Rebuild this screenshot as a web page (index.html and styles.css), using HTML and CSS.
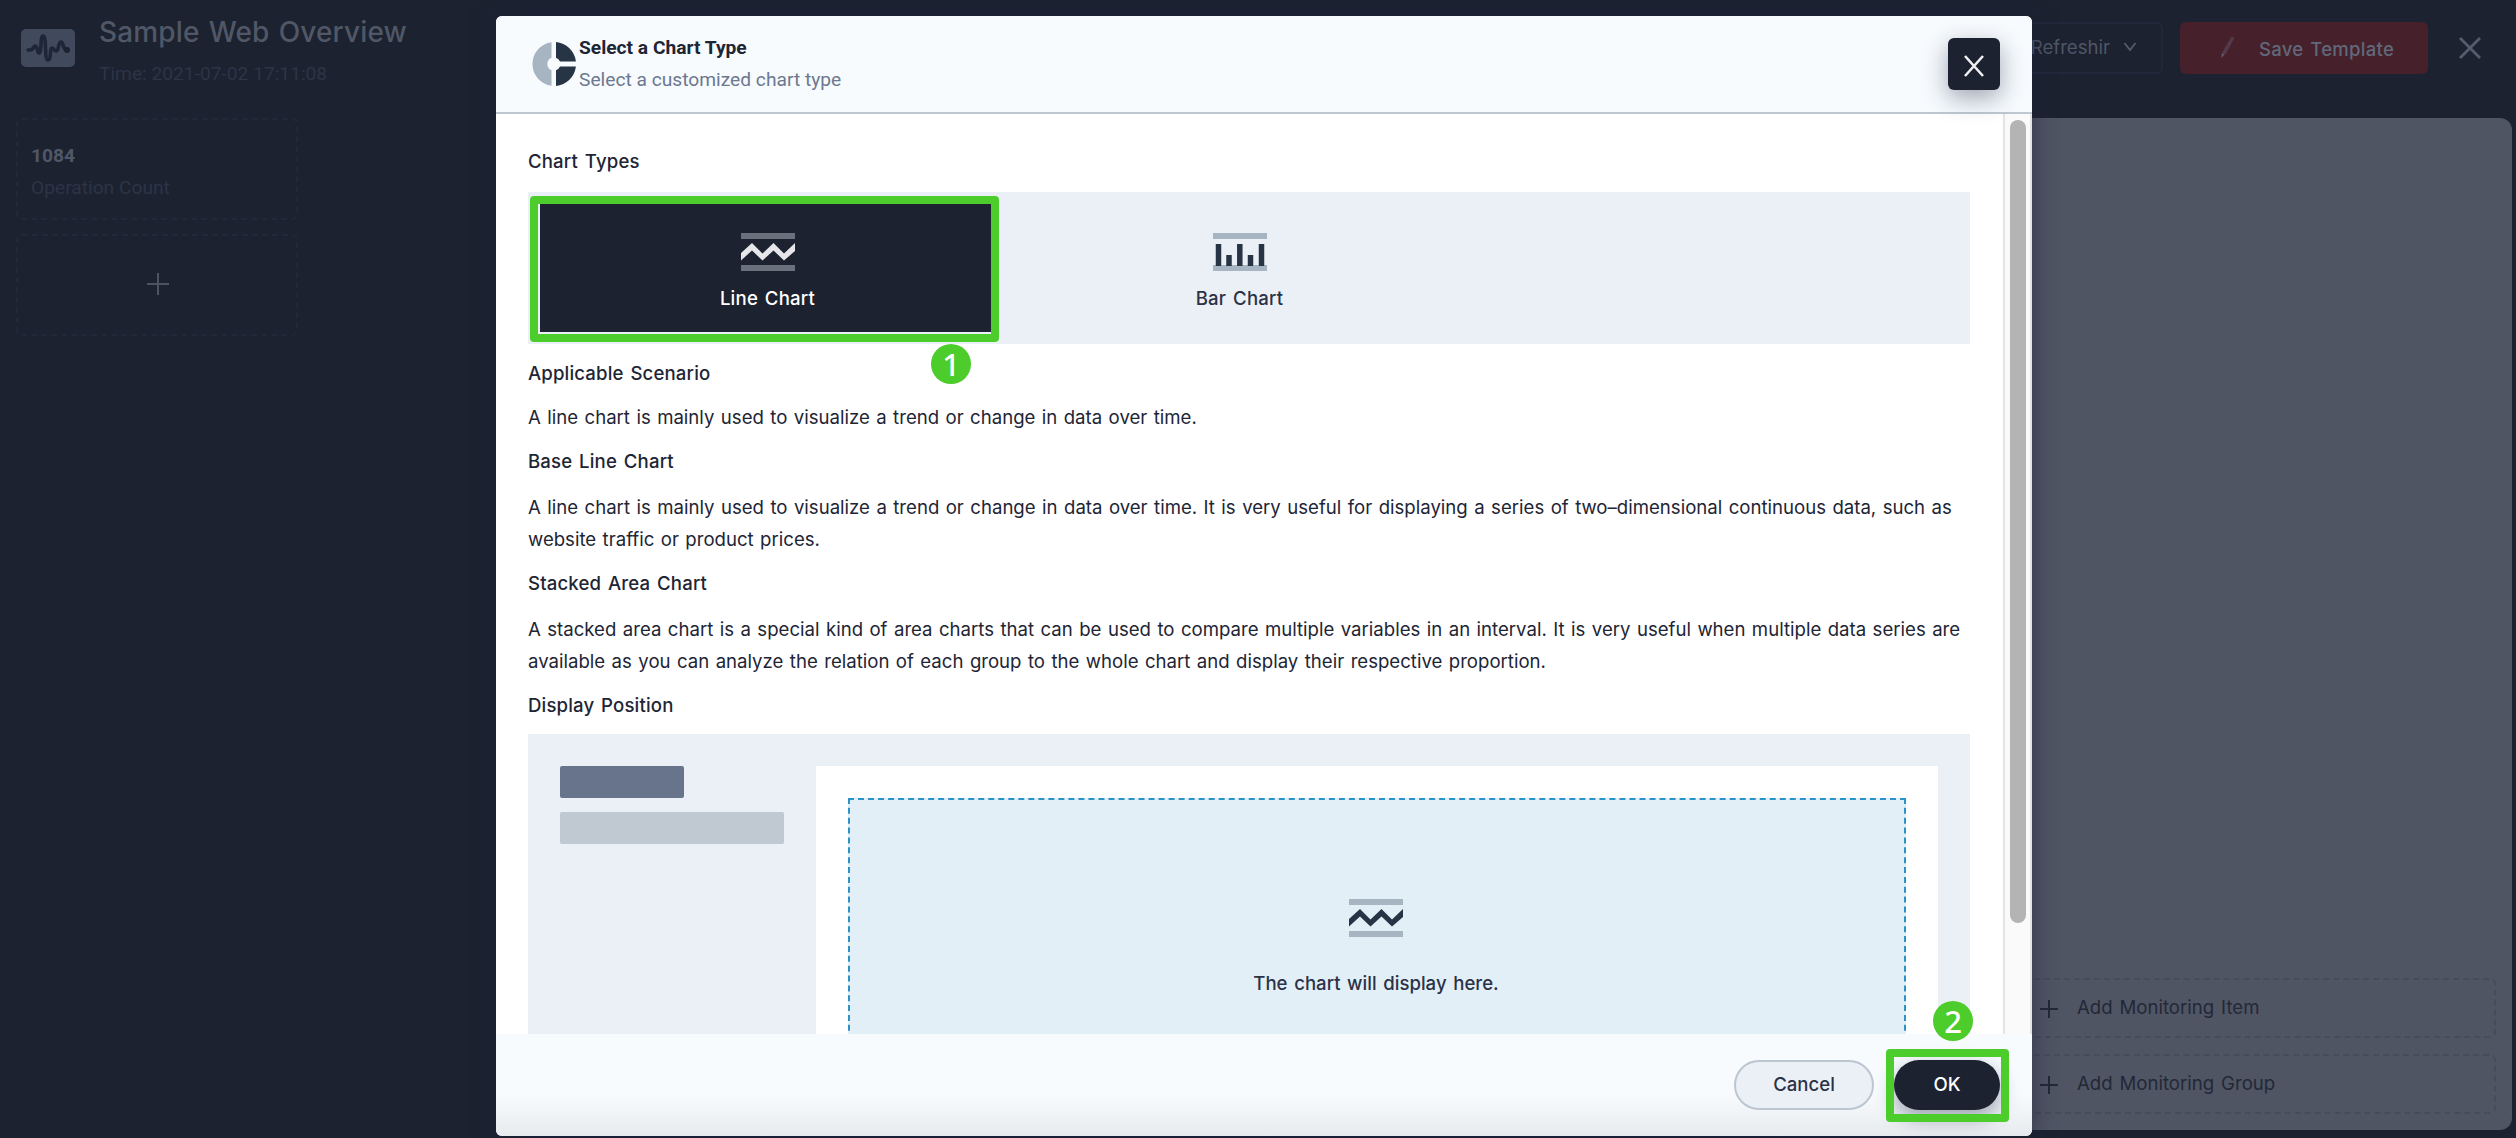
FILE: index.html
```html
<!DOCTYPE html>
<html lang="en">
<head>
<meta charset="utf-8">
<title>Sample Web Overview</title>
<link rel="stylesheet" href="styles.css">
</head>
<body>
<div class="page">
  <header class="topbar">
    <svg class="logo" width="54" height="38" viewBox="0 0 54 38"><rect width="54" height="38" rx="5" fill="#414a5c"/><path d="M7 21h2c4 0 3-4 5-4 3 0 2 7 4 7 3 0 1-17 4-17 4 0 1 24 5 24 4 0 1-12 4-12 2 0 2 3 4 3 3 0 2-9 5-9 3 0 1 8 6 8" fill="none" stroke="#1e2536" stroke-width="3.6" stroke-linecap="round" stroke-linejoin="round"/><circle cx="46" cy="21" r="3" fill="#1c2230"/></svg>
    <div class="heading">
      <h1 class="title">Sample Web Overview</h1>
      <p class="time">Time: 2021-07-02 17:11:08</p>
    </div>
    <div class="select"><span>Refreshir</span>
      <svg width="14" height="10" viewBox="0 0 14 10"><path d="M1.500 1l5.500 7 5.500-7" fill="none" stroke="#555c6b" stroke-width="1.800"/></svg>
    </div>
    <button class="save">
      <svg width="16" height="24" viewBox="0 0 16 24"><path d="M12 2.500l1.200.8L5 18.500 3.200 17.500z" fill="#53394a" stroke="#53394a" stroke-width="1.800" stroke-linejoin="round"/><path d="M1.800 18l2.600 1.500L1.500 23z" fill="#5d6070"/></svg>
      <span>Save Template</span>
    </button>
    <svg class="exit" width="24" height="24" viewBox="0 0 24 24"><path d="M2 2l20 20M22 2L2 22" stroke="#555c6b" stroke-width="2.800"/></svg>
  </header>
  <main class="board">
    <section class="metrics">
      <div class="metric"><strong>1084</strong><span>Operation Count</span></div>
      <div class="metric metric-add"><svg width="22" height="22" viewBox="0 0 22 22"><path d="M11 0v22M0 11h22" stroke="#4c5362" stroke-width="2"/></svg></div>
    </section>
    <section class="canvas">
      <div class="add"><svg width="18" height="18" viewBox="0 0 18 18"><path d="M9 0v18M0 9h18" stroke="#222838" stroke-width="2"/></svg>Add Monitoring Item</div>
      <div class="add"><svg width="18" height="18" viewBox="0 0 18 18"><path d="M9 0v18M0 9h18" stroke="#222838" stroke-width="2"/></svg>Add Monitoring Group</div>
    </section>
  </main>
</div>

<div class="modal">
  <div class="modal-head">
    <svg width="44" height="44" viewBox="0 0 44 44"><path d="M19.500 .2A22 22 0 0 0 19.500 43.800V28.200A6.700 6.700 0 0 1 19.500 15.800z" fill="#a7b4c1"/><path d="M24 .1A22 22 0 0 1 43.900 19.500H28A6.700 6.700 0 0 0 24 15.800z" fill="#263445"/><path d="M24 43.900A22 22 0 0 0 43.900 24.500H28A6.700 6.700 0 0 1 24 28.200z" fill="#263445"/></svg>
    <div class="modal-title"><h2>Select a Chart Type</h2><p>Select a customized chart type</p></div>
    <button class="close"><svg width="22" height="24" viewBox="0 0 22 24"><path d="M2 2l18 20M20 2L2 22" stroke="#f0eff2" stroke-width="2.600"/></svg></button>
  </div>
  <div class="modal-body">
    <div class="content">
      <h3>Chart Types</h3>
      <div class="types">
        <div class="type active">
          <svg width="54" height="38" viewBox="0 0 54 38"><path d="M0 3h54M0 35h54" stroke="#6a707c" stroke-width="6"/><path d="M0 20L11 10 21.500 20.500 32.500 10 43 20.500 54 10V18L43 27.500 32.500 17.500 21.500 27.500 11 17.500 0 27.500z" fill="#e6e5e9"/></svg>
          <span>Line Chart</span>
        </div>
        <div class="type">
          <svg width="54" height="38" viewBox="0 0 54 38"><path d="M0 3h54M0 35h54" stroke="#a7b4c1" stroke-width="6"/><path d="M5.500 11v22M16 22v11M26.800 11v22M37.500 22v11M48.500 11v22" stroke="#263445" stroke-width="5.500"/></svg>
          <span>Bar Chart</span>
        </div>
      </div>
      <h3>Applicable Scenario</h3>
      <p>A line chart is mainly used to visualize a trend or change in data over time.</p>
      <h3>Base Line Chart</h3>
      <p class="long">A line chart is mainly used to visualize a trend or change in data over time. It is very useful for displaying a series of two–dimensional continuous data, such as<br>website traffic or product prices.</p>
      <h3>Stacked Area Chart</h3>
      <p class="long">A stacked area chart is a special kind of area charts that can be used to compare multiple variables in an interval. It is very useful when multiple data series are<br>available as you can analyze the relation of each group to the whole chart and display their respective proportion.</p>
      <h3>Display Position</h3>
      <div class="preview">
        <div class="side"><i class="bar short"></i><i class="bar"></i></div>
        <div class="sheet">
          <div class="drop">
            <svg width="54" height="38" viewBox="0 0 54 38"><path d="M0 3h54M0 35h54" stroke="#a7b4c1" stroke-width="6"/><path d="M0 20L11 10 21.500 20.500 32.500 10 43 20.500 54 10V18L43 27.500 32.500 17.500 21.500 27.500 11 17.500 0 27.500z" fill="#263445"/></svg>
            <span>The chart will display here.</span>
          </div>
        </div>
      </div>
    </div>
    <div class="track"><div class="thumb"></div></div>
  </div>
  <div class="modal-foot">
    <button class="btn">Cancel</button>
    <button class="btn ok">OK</button>
  </div>
</div>

<div class="mark mark-type"></div>
<div class="step step-1">1</div>
<div class="mark mark-ok"></div>
<div class="step step-2">2</div>
</body>
</html>
```
FILE: styles.css
```css
* { box-sizing: border-box; margin: 0; padding: 0; }
body { width: 2516px; height: 1138px; position: relative; overflow: hidden; background: #1c2230; font: 400 18.600px/32px Inter, sans-serif; color: #1e2535; }
svg { display: block; flex: none; }
button { font: inherit; border: 0; }

.page { height: 1138px; display: flex; flex-direction: column; }
.topbar { height: 118px; display: flex; align-items: flex-start; padding: 22px 34px 0 21px; }
.logo { margin-top: 7px; }
.heading { flex: 1; margin: -10px 0 0 24px; }
.title { font: 500 28px/40px Inter, sans-serif; letter-spacing: .15px; word-spacing: 1.500px; color: #505766; }
.time { font: 400 19.200px/32px Roboto, sans-serif; margin-top: 6px; color: #2d3446; }
.select { width: 300px; height: 52px; border: 2px solid #22283a; border-radius: 6px; display: flex; align-items: center; justify-content: flex-end; gap: 13px; padding: 0 24px 3px 0; color: #505766; }
.save { width: 248px; height: 52px; margin: 0 30px 0 17px; border-radius: 6px; background: #46202a; display: flex; align-items: center; gap: 23px; padding: 2px 0 0 40px; color: #60687a; font-weight: 500; letter-spacing: .25px; word-spacing: 1.500px; }
.save svg { margin-top: -5px; }
.exit { margin-top: 14px; }
.board { height: 1012px; display: flex; justify-content: space-between; padding-right: 4px; }
.metrics { width: 298px; padding-left: 16px; display: flex; flex-direction: column; gap: 14px; font: 400 19.200px/32px Roboto, sans-serif; color: #2d3446; }
.metric { height: 102px; border: 2px dashed #222839; border-radius: 6px; padding: 20px 0 0 13px; display: flex; flex-direction: column; }
.metric strong { font-weight: 700; color: #505766; }
.metric-add { padding: 0 0 2px 2px; align-items: center; justify-content: center; }
.canvas { width: 620px; background: #505564; border-radius: 12px; display: flex; flex-direction: column; justify-content: flex-end; gap: 16px; padding: 16px; }
.add { height: 60px; border: 2px dashed #464c5b; border-radius: 6px; display: flex; align-items: center; gap: 19px; padding: 0 0 2px 130px; color: #222838; word-spacing: 1.700px; }
.add svg { margin-top: 4px; }

.modal { position: absolute; left: 496px; top: 16px; width: 1536px; height: 1120px; border-radius: 6px; overflow: hidden; background: #fff; box-shadow: 0 0 24px rgba(28, 34, 56, .6); display: flex; flex-direction: column; }
.modal-head { height: 98px; flex: none; position: relative; z-index: 1; background: #f7fbfe; border-bottom: 2px solid #bfc8d2; display: flex; align-items: flex-start; padding: 22px 32px 0 36px; }
.modal-head > svg { margin-top: 4px; }
.modal-title { flex: 1; margin-left: 3px; margin-top: -6px; font: 400 19.200px/32px Roboto, sans-serif; color: #6c788f; }
.modal-title h2 { font: 700 19.200px/32px Roboto, sans-serif; color: #1e2535; }
.close { width: 52px; height: 52px; border-radius: 6px; background: #1c2230; display: flex; align-items: center; justify-content: center; padding-top: 3px; box-shadow: 0 8px 24px rgba(28, 34, 65, .4); }
.modal-body { height: 920px; display: flex; overflow: hidden; }
.content { flex: 1; padding: 31px 33px 0 32px; }
.content h3 { font: 500 18.600px/32px Inter, sans-serif; letter-spacing: .15px; word-spacing: 1.700px; }
.content p { word-spacing: 1.200px; margin: 12px 0; white-space: nowrap; }
.content .long { margin: 14px 0 12px; word-spacing: 1.220px; }
.types { height: 152px; margin: 15px 0 13px; padding: 12px; background: #ebf0f6; display: flex; gap: 17px; }
.type { width: 455px; display: flex; flex-direction: column; align-items: center; gap: 11px; padding-top: 29px; font-weight: 500; letter-spacing: .2px; word-spacing: 1.700px; color: #2b3248; }
.active { background: #1c2230; color: #fff; }
.preview { height: 420px; margin-top: 13px; padding: 32px; background: #ebf0f6; display: flex; gap: 32px; }
.side { width: 224px; display: flex; flex-direction: column; gap: 14px; }
.bar { height: 32px; border-radius: 2px; background: #c0c9d2; }
.short { width: 124px; background: #67748b; }
.sheet { flex: 1; background: #fff; padding: 32px; }
.drop { height: 292px; border: 2px dashed #2c93c9; background: #e2eff7; display: flex; flex-direction: column; align-items: center; gap: 30px; padding: 99px 2px 0 0; font-weight: 500; word-spacing: 1.700px; color: #2b3248; }
.track { width: 29px; border: solid #e4e4e4; border-width: 0 2px; background: #fafafa; padding: 6px 0 0 5px; }
.thumb { width: 16px; height: 803px; border-radius: 8px; background: #b4b4b4; }
.modal-foot { height: 102px; background: linear-gradient(#f7fbfe 60%, #e8ebee); display: flex; justify-content: flex-end; gap: 20px; padding: 26px 32px 0; }
.btn { width: 140px; height: 50px; border: 2px solid #bcc6d1; border-radius: 25px; background: #ebf0f7; padding-bottom: 2px; font-weight: 500; color: #2b3248; }
.ok { width: 106px; border: 0; background: #1c2230; color: #fff; box-shadow: 0 8px 20px rgba(28, 34, 65, .4); }

.mark { position: absolute; border: 8px solid #4ccd2c; border-radius: 4px; }
.mark-type { left: 530px; top: 196px; width: 469px; height: 146px; }
.mark-ok { left: 1886px; top: 1049px; width: 123px; height: 73px; }
.step { position: absolute; width: 40px; height: 40px; border-radius: 50%; background: #4ccd2c; color: #fff; font: 500 31px/40px "Noto Sans", sans-serif; text-align: center; }
.step-1 { left: 931px; top: 344px; }
.step-2 { left: 1933px; top: 1001px; }
```
